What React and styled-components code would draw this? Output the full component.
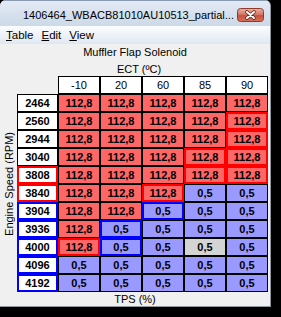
import React from 'react';
import styled, { createGlobalStyle } from 'styled-components';

const GlobalStyle = createGlobalStyle`
  html, body { margin: 0; padding: 0; background: #000; }
  body { font-family: "Liberation Sans", Tahoma, Arial, sans-serif; font-size: 11px; color: #000; }
`;

const COLS = ['-10', '20', '60', '85', '90'];
const ROWS = ['2464', '2560', '2944', '3040', '3808', '3840', '3904', '3936', '4000', '4096', '4192'];
// how many leading columns hold 112,8 in each row
const HIGH_COUNT = [5, 5, 5, 5, 5, 3, 2, 1, 1, 0, 0];

const RED_EDGES = ['1-4', '2-4', '3-3', '3-4', '4-3', '4-4', '5-2', '8-0'];
const BLUE_EDGES = ['6-2', '7-1', '8-1'];
const SELECTED = '8-3';

const rowEdge = (i) => (i === 4 || i === 5 ? '#ff0000' : i >= 6 ? '#0000ff' : null);

function App() {
    return (
        <>
            <GlobalStyle />
            <Window>
                <TitleBar>
                    <Title>1406464_WBACB81010AU10513_partial...</Title>
                    <CloseButton>
                        <svg width="27" height="14" viewBox="0 0 27 14">
                            <defs>
                                <linearGradient id="cg" x1="0" y1="0" x2="0" y2="1">
                                    <stop offset="0" stopColor="#eab1a3" />
                                    <stop offset="0.45" stopColor="#d77a66" />
                                    <stop offset="0.55" stopColor="#c9503b" />
                                    <stop offset="1" stopColor="#d9735c" />
                                </linearGradient>
                            </defs>
                            <rect x="0.5" y="0.5" width="26" height="13" rx="3" fill="url(#cg)" stroke="#8e3b2d" />
                            <path d="M10 4 L17 10 M17 4 L10 10" stroke="#5a2a22" strokeWidth="3.6" strokeLinecap="round" />
                            <path d="M10 4 L17 10 M17 4 L10 10" stroke="#fff" strokeWidth="2" strokeLinecap="round" />
                        </svg>
                    </CloseButton>
                </TitleBar>
                <MenuBar>
                    <MenuItem><u>T</u>able</MenuItem>
                    <MenuItem><u>E</u>dit</MenuItem>
                    <MenuItem><u>V</u>iew</MenuItem>
                </MenuBar>
                <Content>
                    <Caption>Muffler Flap Solenoid</Caption>
                    <TopAxis>ECT (ºC)</TopAxis>
                    <Body>
                        <SideAxis>
                            <SideText>Engine Speed (RPM)</SideText>
                        </SideAxis>
                        <Grid>
                            <Corner />
                            {COLS.map((c) => (
                                <HeadCell key={c}>{c}</HeadCell>
                            ))}
                            {ROWS.map((r, i) => (
                                <React.Fragment key={r}>
                                    <Cell $fill="#fff" $edge={rowEdge(i)}>{r}</Cell>
                                    {COLS.map((c, j) => {
                                        const key = `${i}-${j}`;
                                        const high = j < HIGH_COUNT[i];
                                        const edge = RED_EDGES.includes(key)
                                            ? '#ff0000'
                                            : BLUE_EDGES.includes(key)
                                            ? '#0000ff'
                                            : null;
                                        const fill = key === SELECTED ? '#d4d4d4' : high ? '#ff6666' : '#9999ff';
                                        return (
                                            <Cell key={c} $fill={fill} $edge={edge}>
                                                {high ? '112,8' : '0,5'}
                                            </Cell>
                                        );
                                    })}
                                </React.Fragment>
                            ))}
                        </Grid>
                    </Body>
                    <BottomAxis>TPS (%)</BottomAxis>
                </Content>
            </Window>
        </>
    );
}

export default App;

const Window = styled.div`
    width: 271px;
    height: 307px;
    box-sizing: border-box;
    display: flex;
    flex-direction: column;
    background: #f0f0f0;
    border-right: 1px solid #8f969e;
    border-bottom: 1px solid #8f969e;
    border-radius: 6px 6px 0 0;
    overflow: hidden;
`;

const TitleBar = styled.div`
    height: 26px;
    box-sizing: border-box;
    display: flex;
    align-items: center;
    padding: 2px 6px 0 23px;
    background: linear-gradient(#e2eaf4, #cdd9e8);
    border-top: 1px solid #8a9aae;
`;

const Title = styled.div`
    flex: 1;
    font-size: 11px;
    white-space: nowrap;
    overflow: hidden;
`;

const CloseButton = styled.div`
    width: 27px;
    height: 14px;
    display: flex;
`;

const MenuBar = styled.div`
    height: 18px;
    display: flex;
    align-items: center;
    gap: 8px;
    padding-left: 6px;
    background: linear-gradient(#fcfdfe, #dfe7f1);
`;

const MenuItem = styled.span`
    font-size: 11.5px;
    u { text-decoration: underline; }
`;

const Content = styled.div`
    flex: 1;
    display: flex;
    flex-direction: column;
`;

const Caption = styled.div`
    height: 17px;
    line-height: 17px;
    text-align: center;
`;

const TopAxis = styled.div`
    height: 15px;
    line-height: 17px;
    text-align: center;
    padding-left: 8px;
`;

const Body = styled.div`
    display: flex;
`;

const SideAxis = styled.div`
    width: 17px;
    display: flex;
    align-items: center;
    justify-content: center;
`;

const SideText = styled.div`
    writing-mode: vertical-rl;
    transform: rotate(180deg);
    white-space: nowrap;
`;

const Grid = styled.div`
    display: grid;
    grid-template-columns: 41px repeat(5, 42px);
    grid-auto-rows: 18px;
`;

const Corner = styled.div``;

const HeadCell = styled.div`
    box-sizing: border-box;
    border: 1px solid #000;
    background: #fff;
    display: flex;
    align-items: center;
    justify-content: center;
`;

const Cell = styled.div`
    box-sizing: border-box;
    border: ${(p) => (p.$edge ? `2px solid ${p.$edge}` : '1px solid #000')};
    background: ${(p) => p.$fill};
    display: flex;
    align-items: center;
    justify-content: center;
    font-weight: bold;
`;

const BottomAxis = styled.div`
    height: 14px;
    line-height: 15px;
    text-align: center;
`;
